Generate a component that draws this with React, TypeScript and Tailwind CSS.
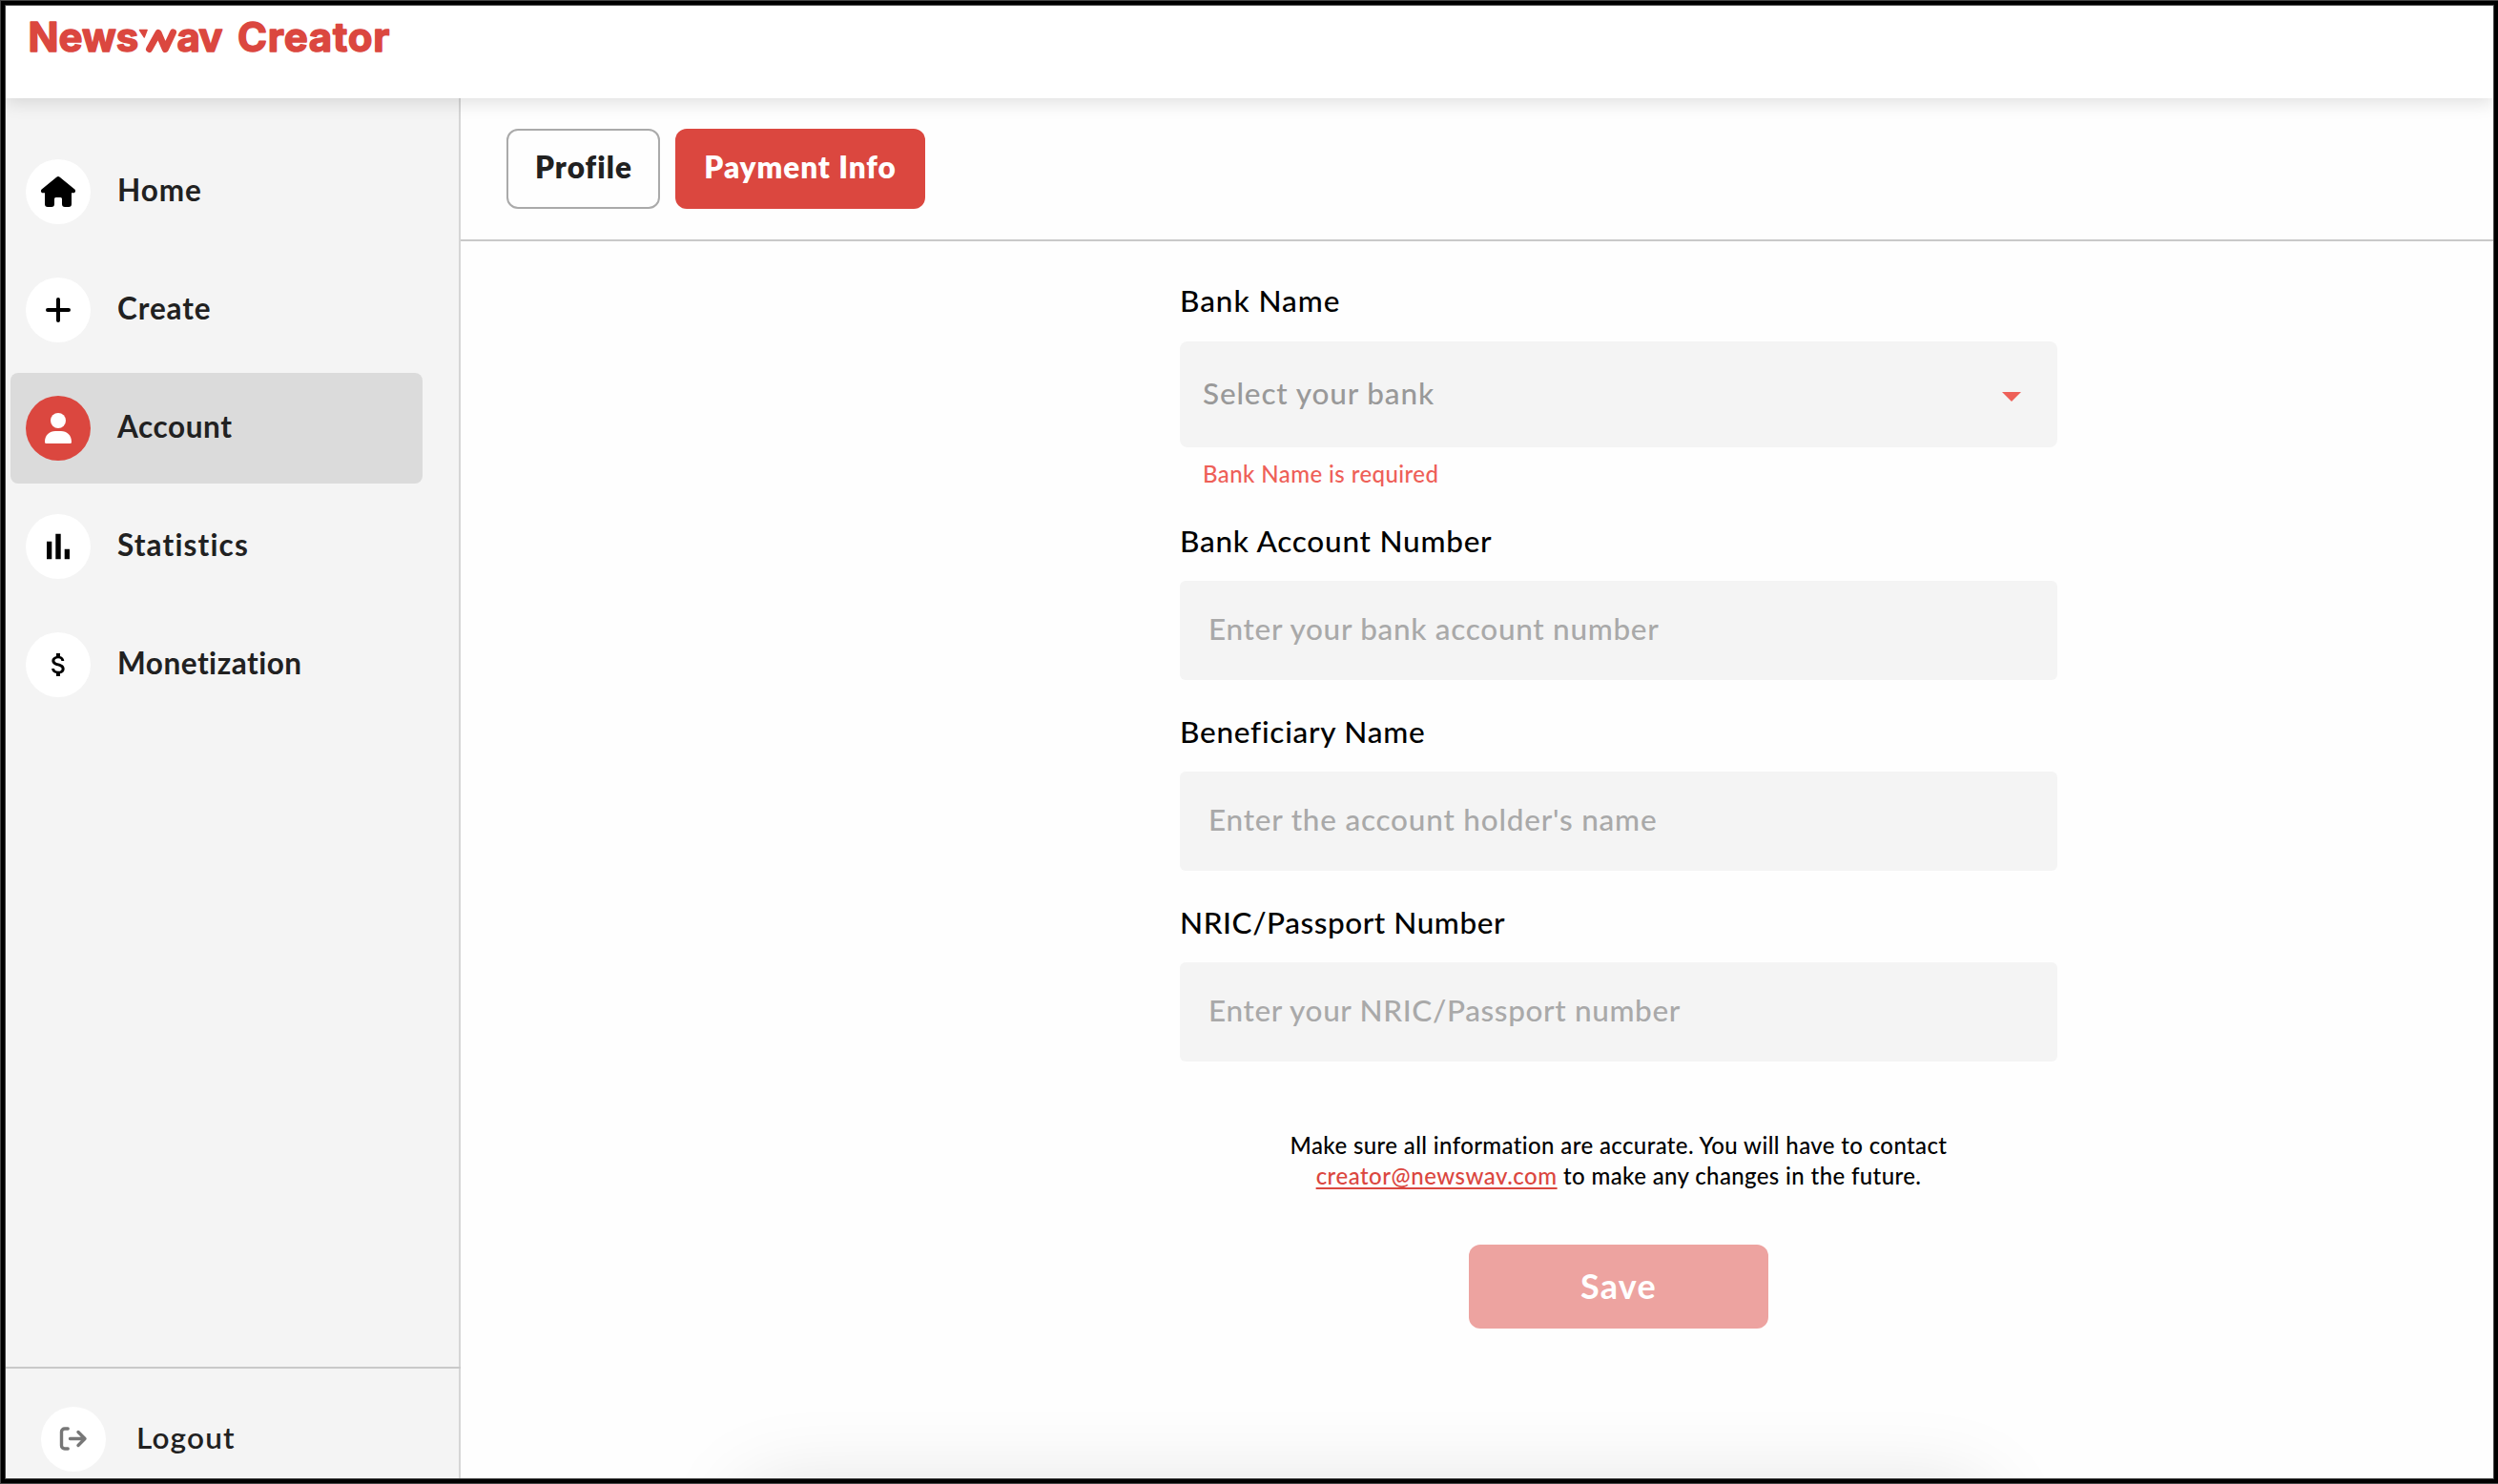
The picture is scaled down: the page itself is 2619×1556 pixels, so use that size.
import type { ReactNode } from "react";

function Logo() {
  return (
    <svg
      className="h-16 w-[440px]"
      viewBox="0 0 440 64"
      fill="#db473f"
      stroke="#db473f"
      strokeWidth="1.5"
      strokeLinejoin="round"
      fontFamily="Inter, sans-serif"
      fontSize="42"
      fontWeight="700"
      role="img"
      aria-label="Newswav Creator"
    >
      <text x="23.5" y="48">News</text>
      <path d="M140.500 25.500h7.600l-2.900 7.400z" />
      <path d="M150.500 45.500 160 28.500 167.300 45.500 175.500 28" fill="none" strokeWidth="7" strokeLinecap="round" />
      <text x="179.5" y="48" letterSpacing="-1">av</text>
      <text x="243" y="48" letterSpacing="0.75">Creator</text>
    </svg>
  );
}

function HomeIcon() {
  return (
    <path
      d="M32.3 18.7a2.7 2.7 0 0 1 3.4 0L51 31.2c1.9 1.5 1.1 4-1 4h-2V47a3 3 0 0 1-3 3h-4a3 3 0 0 1-3-3v-5.500a1.500 1.500 0 0 0-1.500-1.500h-5a1.500 1.500 0 0 0-1.500 1.500V47a3 3 0 0 1-3 3h-4a3 3 0 0 1-3-3V35.200h-2c-2.100 0-2.900-2.500-1-4z"
      fill="#000"
    />
  );
}

function PlusIcon() {
  return <path d="M34 23v22M23 34h22" stroke="#000" strokeWidth="4" strokeLinecap="round" fill="none" />;
}

function UserIcon() {
  return (
    <g fill="#fff">
      <circle cx="34" cy="26" r="8" />
      <path d="M20 48.500C20 41 25 37 31 37h6c6 0 11 4 11 11.500a1.500 1.500 0 0 1-1.500 1.500h-25a1.500 1.500 0 0 1-1.500-1.500z" />
    </g>
  );
}

function StatsIcon() {
  return <path d="M22 28.700h5.300v18.600H22zM31.300 20.700h5.400v26.600h-5.400zM40.700 36.700H46v10.600h-5.300z" fill="#000" />;
}

function DollarIcon() {
  return (
    <path
      transform="translate(18.670 18) scale(1.3333)"
      d="M11.800 10.900c-2.270-.59-3-1.200-3-2.150 0-1.090 1.010-1.850 2.700-1.850 1.780 0 2.440.85 2.500 2.100h2.210c-.07-1.720-1.120-3.300-3.210-3.810V3h-3v2.160c-1.940.42-3.500 1.680-3.500 3.610 0 2.310 1.910 3.460 4.700 4.130 2.500.6 3 1.480 3 2.410 0 .69-.49 1.790-2.700 1.790-2.060 0-2.870-.92-2.980-2.100h-2.200c.12 2.190 1.760 3.420 3.680 3.830V21h3v-2.150c1.950-.37 3.500-1.500 3.500-3.550 0-2.840-2.430-3.810-4.700-4.400z"
      fill="#000"
    />
  );
}

function LogoutIcon() {
  return (
    <g fill="none" stroke="#777" strokeWidth="3.400" strokeLinecap="round" strokeLinejoin="round">
      <path d="M28.200 23h-3.400a3.300 3.300 0 0 0-3.300 3.300v14.400a3.300 3.300 0 0 0 3.300 3.300h3.400" />
      <path d="M30.500 33.500H46M39 26.500l7 7-7 7" />
    </g>
  );
}

function IconCircle({ active = false, children }: { active?: boolean; children: ReactNode }) {
  return (
    <span className={`size-[68px] shrink-0 rounded-full ${active ? "bg-[#db473f]" : "bg-white"}`}>
      <svg viewBox="0 0 68 68" className="size-full" aria-hidden="true">
        {children}
      </svg>
    </span>
  );
}

const navItems = [
  { label: "Home", icon: <HomeIcon />, spacing: "tracking-[0.9px]" },
  { label: "Create", icon: <PlusIcon />, spacing: "tracking-[0.9px]" },
  { label: "Account", icon: <UserIcon />, spacing: "tracking-[0.6px]", active: true },
  { label: "Statistics", icon: <StatsIcon />, spacing: "tracking-[1.15px]" },
  { label: "Monetization", icon: <DollarIcon />, spacing: "tracking-[0.52px]" },
];

function Sidebar() {
  return (
    <aside className="relative flex w-[477px] shrink-0 flex-col border-r-2 border-[#d5d5d5] bg-[#f4f4f4] text-[#212121]">
      <nav className="flex flex-1 flex-col gap-2 pl-[5px] pt-10">
        {navItems.map((item) => (
          <a
            key={item.label}
            className={`flex h-[116px] w-[432px] items-center rounded-lg pl-4 ${item.active ? "bg-[#dbdbdb]" : ""}`}
          >
            <IconCircle active={item.active}>{item.icon}</IconCircle>
            <span className={`ml-7 pb-1 text-[31.5px] font-bold leading-[44px] ${item.spacing}`}>{item.label}</span>
          </a>
        ))}
      </nav>
      <div className="-mr-0.5 flex h-[117px] items-start border-t-2 border-[#c9c9c9] pl-[37px] pt-10">
        <IconCircle>
          <LogoutIcon />
        </IconCircle>
        <span className="ml-8 pt-2.5 text-[31.5px] font-semibold leading-[44px] tracking-[1.2px]">Logout</span>
      </div>
    </aside>
  );
}

function Field({ label, labelClass, placeholder, inputClass }: { label: string; labelClass: string; placeholder: string; inputClass: string }) {
  return (
    <label className="mt-8 block first-of-type:mt-[33px]">
      <span className={`mb-5 block text-[31.5px] leading-[44px] ${labelClass}`}>{label}</span>
      <input
        className={`block h-[104px] w-full rounded-md bg-[#f4f4f4] pb-1 pl-[30px] text-[31.5px] font-medium placeholder:text-[#a9a9a9] placeholder:opacity-100 ${inputClass}`}
        placeholder={placeholder}
      />
    </label>
  );
}

function PaymentForm() {
  return (
    <form className="ml-[754px] w-[920px] pt-10 font-medium">
      <div>
        <div className="mb-[21px] text-[31.5px] leading-[44px] tracking-[0.95px]">Bank Name</div>
        <div className="flex h-[111px] items-center justify-between rounded-lg bg-[#f4f4f4] pl-6 pr-[38px]">
          <span className="pb-1 text-[31.5px] leading-[44px] tracking-[0.87px] text-[#999]">Select your bank</span>
          <svg viewBox="0 0 20 10" className="mt-1 h-2.5 w-5 fill-[#ee6058]" aria-hidden="true">
            <path d="M0 0h20L10 10z" />
          </svg>
        </div>
        <p className="ml-6 mt-3 h-[31px] text-[24px] leading-8 tracking-[0.42px] text-[#ee6058]">Bank Name is required</p>
      </div>

      <Field
        label="Bank Account Number"
        labelClass="tracking-[0.76px]"
        placeholder="Enter your bank account number"
        inputClass="tracking-[0.7px]"
      />
      <Field
        label="Beneficiary Name"
        labelClass="tracking-[0.75px]"
        placeholder="Enter the account holder's name"
        inputClass="tracking-[0.78px]"
      />
      <Field
        label="NRIC/Passport Number"
        labelClass="tracking-[0.56px]"
        placeholder="Enter your NRIC/Passport number"
        inputClass="tracking-[0.64px]"
      />

      <p className="mt-[72px] text-center text-[24px] leading-8 tracking-[0.38px]">
        Make sure all information are accurate. You will have to contact
        <br />
        <a className="tracking-[0.5px] text-[#db473f] underline decoration-2 underline-offset-[3px]">creator@newswav.com</a> to
        make any changes in the future.
      </p>

      <button
        type="button"
        className="mx-auto mt-14 block h-[88px] w-[314px] rounded-xl bg-[#eda3a0] pb-[3px] text-[36px] font-bold tracking-[1.3px] text-white"
      >
        Save
      </button>
    </form>
  );
}

export default function App() {
  return (
    <div className="h-[1556px] w-[2619px] border border-r-0 border-[#444] bg-black font-['Lato','Noto_Sans',sans-serif]">
      <div className="h-[1554px] w-[2618px] border-4 border-black">
        <div className="relative flex h-[1546px] w-[2610px] flex-col overflow-hidden border border-[#444] bg-[#fefefe] text-black">
          <header className="z-10 h-[97px] shrink-0 bg-white shadow-[0_4px_18px_rgba(0,0,0,0.13)]">
            <Logo />
          </header>

          <div className="flex flex-1">
            <Sidebar />
            <main className="flex-1">
              <div className="flex h-[150px] items-start gap-4 border-b-2 border-[#c9c9c9] pl-12 pt-8 text-[31.5px] font-extrabold">
                <button
                  type="button"
                  className="h-[84px] w-[161px] rounded-xl border-2 border-[#aaa] bg-[#fefefe] pb-[3px] pl-px tracking-[1.1px] text-[#212121]"
                >
                  Profile
                </button>
                <button
                  type="button"
                  className="h-[84px] w-[262px] rounded-xl bg-[#db473f] pb-[3px] tracking-[0.95px] text-white"
                >
                  Payment Info
                </button>
              </div>
              <PaymentForm />
            </main>
          </div>

          <div className="pointer-events-none absolute -bottom-[108px] left-[775px] h-24 w-[1300px] rounded-3xl shadow-[0_0_90px_rgba(0,0,0,0.13)]" />
        </div>
      </div>
    </div>
  );
}
